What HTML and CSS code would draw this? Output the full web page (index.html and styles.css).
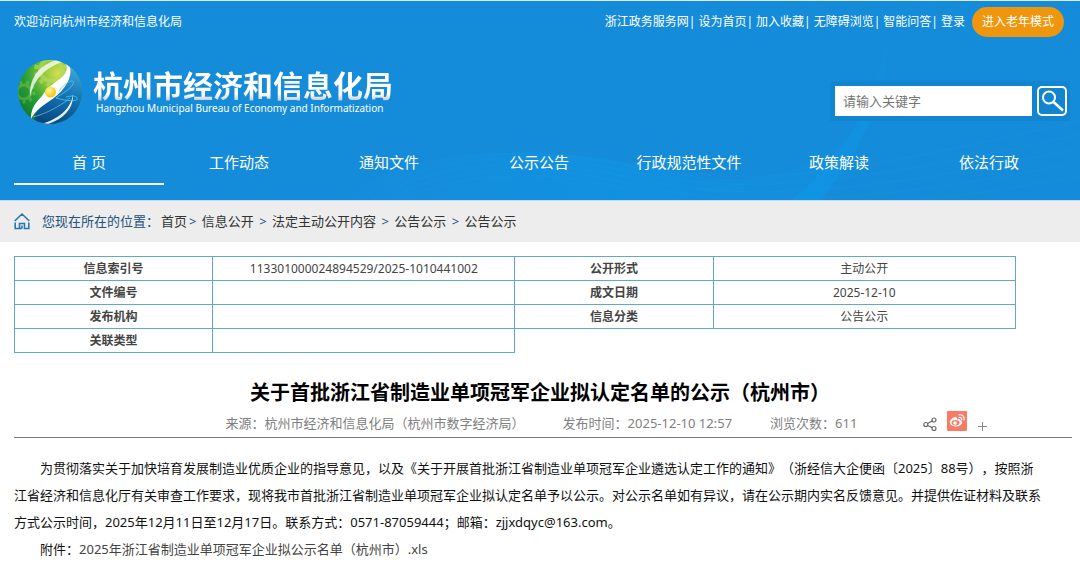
FILE: index.html
```html
<!DOCTYPE html>
<html lang="zh-CN">
<head>
<meta charset="utf-8">
<meta name="viewport" content="width=device-width, initial-scale=1">
<title>杭州市经济和信息化局</title>
<link rel="stylesheet" href="styles.css">
</head>
<body>
<header class="header">
  <svg class="header-waves" viewBox="0 0 760 200" preserveAspectRatio="xMaxYMax slice" aria-hidden="true">
    <defs>
      <linearGradient id="ribbon" x1="0" y1="0" x2="0" y2="1">
        <stop offset="0" stop-color="#0a9aea" stop-opacity="0"/>
        <stop offset="1" stop-color="#0a9aea" stop-opacity=".5"/>
      </linearGradient>
      <linearGradient id="sheet" x1="0" y1="0" x2="1" y2="0">
        <stop offset="0" stop-color="#0a9aea" stop-opacity="0"/>
        <stop offset=".5" stop-color="#0a9aea" stop-opacity=".4"/>
        <stop offset="1" stop-color="#0a9aea" stop-opacity=".05"/>
      </linearGradient>
    </defs>
    <path d="M570 20C568 80 545 150 499 200L470 200C530 150 560 90 570 20Z" fill="url(#ribbon)"/>
    <path d="M20 200C90 150 200 145 290 160C380 180 420 185 470 170C510 158 530 130 560 110C530 150 510 180 490 200Z" fill="url(#sheet)"/>
    <g fill="none" stroke="#2f9fe4" stroke-opacity=".15">
      <path d="M20 200C90 150 180 145 290 162S440 196 760 120"/>
      <path d="M34 200C100 156 190 150 290 168S450 204 760 134"/>
      <path d="M48 200C110 162 200 156 290 174S460 212 760 148"/>
      <path d="M62 200C120 168 210 162 290 180S470 220 760 162"/>
      <path d="M76 200C130 174 220 168 290 186S480 228 760 176"/>
    </g>
  </svg>
  <div class="topbar">
    <span>欢迎访问杭州市经济和信息化局</span>
    <nav class="top-links" aria-label="快捷链接">
      <a href="#">浙江政务服务网</a><span class="sep">|</span>
      <a href="#">设为首页</a><span class="sep">|</span>
      <a href="#">加入收藏</a><span class="sep">|</span>
      <a href="#">无障碍浏览</a><span class="sep">|</span>
      <a href="#">智能问答</a><span class="sep">|</span>
      <a href="#">登录</a>
      <button class="elder-mode" type="button">进入老年模式</button>
    </nav>
  </div>
  <div class="masthead">
    <a class="brand" href="#">
      <svg class="brand-logo" viewBox="0 0 66 66" aria-hidden="true">
        <defs>
          <radialGradient id="green" cx=".62" cy=".22" r=".75">
            <stop offset="0" stop-color="#d5e04c"/>
            <stop offset=".35" stop-color="#7fc23c"/>
            <stop offset=".65" stop-color="#2aa136"/>
            <stop offset="1" stop-color="#12802f"/>
          </radialGradient>
          <linearGradient id="blue" x1=".6" y1="0" x2=".4" y2="1">
            <stop offset="0" stop-color="#4aaee4"/>
            <stop offset=".5" stop-color="#1478b8"/>
            <stop offset="1" stop-color="#07477f"/>
          </linearGradient>
          <radialGradient id="sun" cx=".4" cy=".35" r=".7">
            <stop offset="0" stop-color="#fff59a"/>
            <stop offset="1" stop-color="#efc400"/>
          </radialGradient>
          <clipPath id="globe"><circle cx="33" cy="33" r="32"/></clipPath>
        </defs>
        <g clip-path="url(#globe)">
          <rect width="66" height="66" fill="url(#green)"/>
          <g fill="none" stroke="#b9dc62" stroke-opacity=".6">
            <circle cx="34" cy="11" r="11" stroke-width="4"/>
            <circle cx="34" cy="11" r="15" stroke-width="4" stroke-dasharray="4 4"/>
            <circle cx="7" cy="33" r="7" stroke-width="3" stroke-opacity=".3"/>
            <circle cx="7" cy="33" r="10" stroke-width="3" stroke-dasharray="3 4" stroke-opacity=".3"/>
          </g>
          <path d="M50 2C56 18 47 29 36 38C24 47 15 54 18 66H66V0Z" fill="url(#blue)"/>
          <path d="M44 0C53 6 51 14 43 20C36 25 30 29 27 34C23 41 14 45 14 60C18 52 25 47 34 41C46 33 59 17 51 3L48 0Z" fill="#fff"/>
          <path d="M44 0C24 4 12 17 13 38C17 20 28 9 45 3Z" fill="#fff" fill-opacity=".75"/>
          <path d="M24 65C42 60 54 50 56 35C57 50 46 61 28 66Z" fill="#fff" fill-opacity=".9"/>
          <path d="M16 58C28 55 42 48 53 39" fill="none" stroke="#8fcdec" stroke-width="1" stroke-opacity=".6"/>
          <path d="M42 32C49 22 59 19 56 25C53 31 44 35 39 39C46 41 62 44 60 39C59 36 53 37 49 38" fill="none" stroke="#56c9ec" stroke-width="1" stroke-opacity=".8"/>
        </g>
        <circle cx="33.5" cy="33" r="5.5" fill="url(#sun)"/>
      </svg>
      <span class="brand-text">
        <span class="brand-name">杭州市经济和信息化局</span>
        <span class="brand-en">Hangzhou Municipal Bureau of Economy and Informatization</span>
      </span>
    </a>
    <form class="search" role="search">
      <input class="search-input" type="text" placeholder="请输入关键字" aria-label="请输入关键字">
      <button class="search-button" type="button" aria-label="搜索">
        <svg viewBox="0 0 30 30" aria-hidden="true">
          <rect x="1" y="1" width="28" height="28" rx="4" fill="none" stroke="#fff" stroke-width="2"/>
          <circle cx="12" cy="11.5" r="6" fill="none" stroke="#fff" stroke-width="2"/>
          <path d="M16.500 16L26 24.500" stroke="#fff" stroke-width="2.500"/>
        </svg>
      </button>
    </form>
  </div>
  <nav class="main-nav" aria-label="主导航">
    <a class="nav-item nav-item-active" href="#">首 页</a>
    <a class="nav-item" href="#">工作动态</a>
    <a class="nav-item" href="#">通知文件</a>
    <a class="nav-item" href="#">公示公告</a>
    <a class="nav-item" href="#">行政规范性文件</a>
    <a class="nav-item" href="#">政策解读</a>
    <a class="nav-item" href="#">依法行政</a>
  </nav>
</header>

<nav class="breadcrumb" aria-label="当前位置">
  <svg class="home-icon" viewBox="0 0 16 18" aria-hidden="true">
    <path d="M.7 9L8 2L15.300 9M1.200 10.500V16.500H5.500V11.500H10.500V16.500H14.800V10.500M8 16.500V13.500M5.500 16.500H8" fill="none" stroke="#2478ac" stroke-width="1.600"/>
  </svg>
  <span class="crumbs">您现在所在的位置：<a href="#">首页</a>&gt; <a href="#">信息公开</a> &gt; <a href="#">法定主动公开内容</a> &gt; <a href="#">公告公示</a> &gt; <a href="#">公告公示</a></span>
</nav>

<main class="content">
  <table class="info">
    <colgroup><col class="col-label"><col class="col-value"><col class="col-label"><col class="col-value"></colgroup>
    <tbody>
      <tr><th scope="row">信息索引号</th><td>113301000024894529/2025-1010441002</td><th scope="row">公开形式</th><td>主动公开</td></tr>
      <tr><th scope="row">文件编号</th><td></td><th scope="row">成文日期</th><td>2025-12-10</td></tr>
      <tr><th scope="row">发布机构</th><td></td><th scope="row">信息分类</th><td>公告公示</td></tr>
      <tr><th scope="row">关联类型</th><td></td></tr>
    </tbody>
  </table>

  <article>
    <h1 class="title">关于首批浙江省制造业单项冠军企业拟认定名单的公示（杭州市）</h1>
    <div class="meta">
      <span>来源：杭州市经济和信息化局（杭州市数字经济局）</span>
      <span>发布时间：2025-12-10 12:57</span>
      <span>浏览次数：611</span>
      <div class="share">
        <button class="share-button" type="button" aria-label="分享">
          <svg class="share-icon" viewBox="0 0 14 14" aria-hidden="true">
            <g fill="none" stroke="#666" stroke-width="1.200">
              <circle cx="2.800" cy="7.500" r="2"/><circle cx="11" cy="3" r="2"/><circle cx="11" cy="11.500" r="2"/>
              <path d="M4.600 6.600L9.200 4M4.600 8.500L9.200 10.600"/>
            </g>
          </svg>
        </button>
        <button class="share-button share-weibo" type="button" aria-label="分享到微博">
          <svg class="weibo-icon" viewBox="0 0 20 20" aria-hidden="true">
            <rect width="20" height="20" rx="1" fill="#f87a68"/>
            <path d="M8.200 6C5.500 6.400 2.800 9.300 2.800 11.600C2.800 14 5.600 15.500 8.600 15.500C12.600 15.500 15.200 13.400 15.200 11.500C15.200 10.300 14.300 9.700 13.400 9.500C13.700 8.200 12.500 7.500 10 8.500C10.300 7 9.800 5.800 8.200 6Z" fill="#fff"/>
            <ellipse cx="8.500" cy="11.800" rx="4" ry="2.700" fill="#f87a68"/>
            <circle cx="8" cy="12" r="1.800" fill="#fff"/>
            <path d="M12 6.500C13.900 6 15 7.100 14.600 8.900M12 3.900C15.300 3.200 17.800 5.500 17 9" fill="none" stroke="#fff" stroke-width="1.200" stroke-linecap="round"/>
          </svg>
        </button>
        <button class="share-button" type="button" aria-label="更多">
          <svg class="plus-icon" viewBox="0 0 10 10" aria-hidden="true"><path d="M1 5.500H10M5.500 1V10" stroke="#888" fill="none"/></svg>
        </button>
      </div>
    </div>
    <div class="body">
      <p>为贯彻落实关于加快培育发展制造业优质企业的指导意见，以及《关于开展首批浙江省制造业单项冠军企业遴选认定工作的通知》（浙经信大企便函〔2025〕88号），按照浙江省经济和信息化厅有关审查工作要求，现将我市首批浙江省制造业单项冠军企业拟认定名单予以公示。对公示名单如有异议，请在公示期内实名反馈意见。并提供佐证材料及联系方式公示时间，2025年12月11日至12月17日。联系方式：0571-87059444；邮箱：zjjxdqyc@163.com。</p>
      <p>附件：<a href="#">2025年浙江省制造业单项冠军企业拟公示名单（杭州市）.xls</a></p>
    </div>
  </article>
</main>
</body>
</html>
```

FILE: styles.css
```css
* {
  box-sizing: border-box;
}

body {
  margin: 0;
  background: #fff;
  color: #111;
  font-family: "Noto Sans", "Noto Sans CJK SC", sans-serif;
  font-size: 13px;
  line-height: 20px;
  text-spacing-trim: space-all;
}

a {
  color: inherit;
  text-decoration: none;
}

button,
input {
  font: inherit;
}

button {
  padding: 0;
  border: 0;
  background: none;
  cursor: pointer;
}

svg {
  display: block;
}

/* Header */
.header {
  position: relative;
  border-top: 1px solid #dfeaf2;
  border-bottom: 1px solid #c0daee;
  background: #158cda;
  color: #fff;
}

.header-waves {
  position: absolute;
  right: 0;
  bottom: 0;
  width: 70%;
  height: 100%;
}

.topbar,
.masthead,
.main-nav {
  position: relative;
  display: flex;
  justify-content: space-between;
}

.topbar {
  align-items: center;
  padding: 6px 16px 0 14px;
  font-size: 12px;
}

.top-links {
  display: flex;
  align-items: center;
}

.sep {
  margin-right: 3px;
}

.elder-mode {
  height: 30px;
  margin-left: 7px;
  padding: 0 10px;
  border-radius: 15px;
  background: #ef960c;
  color: #fff;
}

.masthead {
  align-items: center;
  padding: 22px 10px 0 17px;
}

.brand {
  display: flex;
  align-items: center;
  gap: 10px;
}

.brand-logo {
  width: 66px;
  height: 66px;
}

.brand-text {
  display: flex;
  flex-direction: column;
}

.brand-name {
  font-size: 30px;
  font-weight: 700;
  line-height: 32px;
  background: linear-gradient(#fff 75%, #c4cdd4 95%);
  background-clip: text;
  color: transparent;
}

.brand-en {
  padding-left: 3px;
  font-size: 10px;
  line-height: 12px;
}

.search {
  display: flex;
  gap: 5px;
  margin-top: 18px;
  padding: 5px 3px 5px 5px;
  background: #1285d0;
}

.search-input {
  width: 197px;
  height: 30px;
  padding: 0 8px;
  border: 0;
  background: #fff;
  color: #333;
}

.search-input::placeholder {
  color: #757575;
  opacity: 1;
}

.search-button {
  width: 30px;
  height: 30px;
}

.main-nav {
  margin: 16px 16px 0 14px;
  padding-bottom: 15px;
}

.nav-item {
  flex: 1;
  padding: 10px 0;
  border-bottom: 2px solid transparent;
  font-size: 15px;
  line-height: 22px;
  text-align: center;
}

.nav-item-active {
  border-color: #fff;
}

/* Breadcrumb */
.breadcrumb {
  display: flex;
  align-items: center;
  gap: 12px;
  padding: 10px 14px 11px;
  background: #ededed;
  color: #24507c;
}

.breadcrumb a {
  padding: 0 2px;
  color: #333;
}

.home-icon {
  width: 16px;
  height: 18px;
}

/* Content */
.content {
  padding: 14px 8px 0 14px;
}

.info {
  width: 94.7%;
  border-collapse: collapse;
  table-layout: fixed;
  font-size: 12px;
  text-align: center;
}

.col-label {
  width: 19.8%;
}

.col-value {
  width: 30.2%;
}

.info th,
.info td {
  height: 24px;
  padding: 0;
  border: 1px solid #5fa8d3;
  color: #444;
}

.title {
  margin: 25px 0 0;
  padding-right: 6px;
  color: #000;
  font-size: 20px;
  line-height: 30px;
  text-align: center;
}

.meta {
  display: flex;
  align-items: center;
  gap: 38px;
  padding: 3px 0 2px 20%;
  border-bottom: 1px solid #777;
  color: #808080;
}

.share {
  display: flex;
  align-items: flex-end;
  gap: 10px;
  margin-left: 28px;
  padding-bottom: 4px;
}

.share-icon {
  width: 14px;
  height: 14px;
}

.weibo-icon {
  width: 20px;
  height: 20px;
}

.plus-icon {
  width: 10px;
  height: 10px;
}

.body {
  padding-top: 17px;
  line-height: 27px;
}

.body p {
  max-width: 79em;
  margin: 0;
  text-indent: 2em;
}

.body a {
  color: #444;
}
```
